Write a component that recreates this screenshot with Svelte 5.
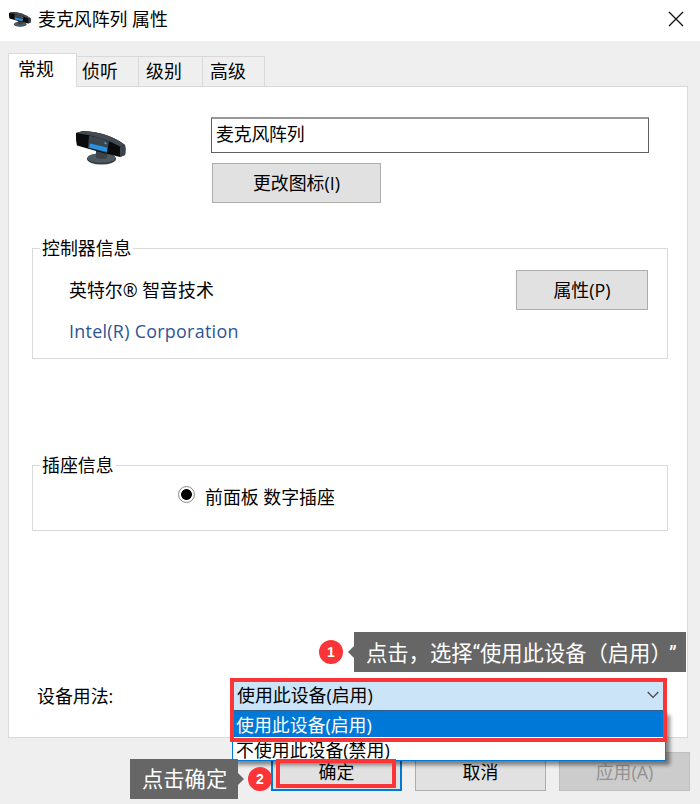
<script lang="ts">
	const tabs = ['常规', '侦听', '级别', '高级'];
	const options = ['使用此设备(启用)', '不使用此设备(禁用)'];

	let activeTab = $state('常规');
	let selected = $state(options[0]);
</script>

{#snippet deviceIcon()}
	<svg class="device" viewBox="0 0 50 34" aria-hidden="true">
		<ellipse cx="25.500" cy="28" rx="14.500" ry="5.500" fill="#343a40" />
		<ellipse cx="25.500" cy="27" rx="14" ry="4.800" fill="#505960" />
		<path d="M20 18h11v9q-5 2-11 0z" fill="#3b4248" />
		<path d="M0 2L7 0Q32 1 49 14q1 5 0 10l-5 2Q22 21 1 14.500Q-.5 8 0 2z" fill="#090b0d" />
		<path d="M0 2L7 0Q32 1 49 14l-5 1.500Q25 5 0 2z" fill="#434a51" />
		<path d="M13 4.500Q23 6 33 10.500l-2 11.500-19-5z" fill="#3b434b" />
		<path d="M14 12.500l17 4v4.500l-18-4.500z" fill="#2793e6" />
		<path d="M28.500 11l2 .5v2l-2-.5z" fill="#3aa5ef" />
		<path d="M44 15.500l5-1.500q1 5 0 10l-5 2z" fill="#3c434a" />
	</svg>
{/snippet}

<div class="window">
	<header class="titlebar">
		{@render deviceIcon()}
		<h1>麦克风阵列 属性</h1>
		<button class="close" type="button" aria-label="关闭">
			<svg viewBox="0 0 16 16" width="16" height="16">
				<path d="M1 1l14 14M15 1L1 15" fill="none" stroke="#111" stroke-width="1.300" />
			</svg>
		</button>
	</header>

	<nav class="tabs">
		{#each tabs as tab (tab)}
			<button type="button" class:active={tab === activeTab} onclick={() => (activeTab = tab)}>{tab}</button>
		{/each}
	</nav>

	<main class="panel">
		<section class="identity">
			{@render deviceIcon()}
			<div>
				<input type="text" value="麦克风阵列" aria-label="名称" />
				<button class="btn" type="button">更改图标(I)</button>
			</div>
		</section>

		<section class="group controller">
			<h2>控制器信息</h2>
			<div>
				<p>英特尔® 智音技术</p>
				<p class="vendor">Intel(R) Corporation</p>
			</div>
			<button class="btn" type="button">属性(P)</button>
		</section>

		<section class="group jack">
			<h2>插座信息</h2>
			<span class="radio"></span>
			<span>前面板 数字插座</span>
		</section>

		<section class="usage">
			<span>设备用法:</span>
			<div class="combo">
				<div class="current">
					<span>{selected}</span>
					<svg viewBox="0 0 12 8" width="12" height="8">
						<path d="M.7 1L6 6.500 11.300 1" fill="none" stroke="#444" stroke-width="1.200" />
					</svg>
				</div>
				<ul class="menu">
					{#each options as option (option)}
						<li class:selected={option === selected}>
							<button type="button" onclick={() => (selected = option)}>{option}</button>
						</li>
					{/each}
				</ul>
				<div class="mark"></div>
				<div class="tip choose">
					<b>1</b>
					<span>点击，选择“使用此设备（启用）<i>”</i></span>
				</div>
			</div>
		</section>
	</main>

	<footer>
		<div class="confirm">
			<button class="btn default" type="button">确定</button>
			<div class="mark"></div>
			<div class="tip ok">
				<span>点击确定</span>
				<b>2</b>
			</div>
		</div>
		<button class="btn" type="button">取消</button>
		<button class="btn" type="button" disabled>应用(A)</button>
	</footer>
</div>

<style>
	:global(body) {
		margin: 0;
	}

	.window,
	.window * {
		box-sizing: border-box;
	}

	.window {
		width: 700px;
		height: 804px;
		overflow: hidden;
		color: #000;
		background: #efefef;
		font: 17.900px/24px 'Open Sans', 'Noto Sans CJK SC', sans-serif;
	}

	h1,
	h2,
	p,
	ul {
		margin: 0;
		padding: 0;
		font-size: inherit;
		font-weight: 400;
	}

	button,
	input {
		margin: 0;
		padding: 0;
		border: 0;
		border-radius: 0;
		color: inherit;
		background: none;
		font: inherit;
	}

	.titlebar {
		display: flex;
		align-items: center;
		height: 41px;
		padding: 0 16px 3px 9px;
		background: #fff;
	}

	.titlebar .device {
		width: 22px;
		height: 15px;
		margin-right: 7px;
	}

	.titlebar h1 {
		flex: 1;
	}

	.close {
		display: flex;
	}

	.tabs {
		position: relative;
		z-index: 1;
		display: flex;
		align-items: flex-end;
		height: 46px;
		padding-left: 8px;
	}

	.tabs button {
		width: 64px;
		height: 31px;
		padding: 0 0 1px 7px;
		border: 1px solid #d9d9d9;
		border-left: 0;
		text-align: left;
	}

	.tabs button:nth-child(2) {
		width: 62px;
		padding-left: 5px;
	}

	.tabs button:last-child {
		width: 62px;
	}

	.tabs .active {
		width: 69px;
		height: 34px;
		padding: 0 0 4px 9px;
		border: 1px solid #d9d9d9;
		border-bottom: 0;
		background: #fff;
	}

	.panel {
		width: 680px;
		height: 652px;
		margin: -1px 0 0 8px;
		padding: 30px 19px 0 23px;
		border: 1px solid #d9d9d9;
		background: #fff;
	}

	.identity {
		display: flex;
		height: 131px;
		padding-left: 44px;
	}

	.identity .device {
		width: 50px;
		height: 34px;
		margin: 14px 85px 0 0;
	}

	.identity input {
		display: block;
		width: 438px;
		height: 36px;
		margin-bottom: 10px;
		padding: 0 0 5px 4px;
		border: 1px solid #606060;
		border-top: 2px solid #999;
		letter-spacing: -0.2px;
	}

	.btn {
		width: 132px;
		height: 40px;
		border: 1px solid #adadad;
		background: #e1e1e1;
	}

	.identity .btn {
		width: 169px;
		margin-left: 1px;
	}

	.group {
		position: relative;
		display: flex;
		width: 636px;
		border: 1px solid #d9d9d9;
	}

	.group h2 {
		position: absolute;
		top: -13px;
		left: 7px;
		padding: 0 2px;
		background: #fff;
	}

	.controller {
		justify-content: space-between;
		height: 111px;
		padding: 21px 19px 0 36px;
	}

	.controller p {
		margin: 8px 0 17px;
	}

	.controller .vendor {
		margin: 0;
		color: #2c5594;
		letter-spacing: 0.28px;
	}

	.jack {
		height: 66px;
		margin-top: 106px;
		padding: 20px 0 0 145px;
	}

	.jack > span:last-child {
		margin-top: -1px;
	}

	.radio {
		width: 17px;
		height: 17px;
		margin: 0 10px 0 0;
		border: 1px solid #888;
		border-radius: 50%;
		background: radial-gradient(circle, #000 5px, #fff 5.800px);
	}

	/* keeps the footer behind the open menu */
	.usage {
		position: relative;
		z-index: 1;
		display: flex;
		align-items: flex-start;
		margin-top: 147px;
		padding-left: 5px;
	}

	.usage > span {
		width: 193px;
		padding-top: 6px;
	}

	.combo {
		position: relative;
		width: 437px;
	}

	.current {
		display: flex;
		align-items: center;
		justify-content: space-between;
		height: 33px;
		padding: 2px 8px 0 7px;
		border-bottom: 1px solid #2d5f8f;
		background: #cce4f7;
	}

	.menu {
		position: absolute;
		top: 33px;
		left: 2px;
		width: 434px;
		height: 50px;
		border: 1px solid #0078d7;
		background: #fff;
		box-shadow: 4px 4px 4px rgb(0 0 0 / 0.45);
		list-style: none;
	}

	.menu li {
		height: 23px;
	}

	.menu .selected {
		height: 25px;
		color: #fff;
		background: #0078d7;
	}

	.menu button {
		display: block;
		padding-left: 3px;
		line-height: 26px;
	}

	.mark {
		position: absolute;
		border: 4px solid #fb3437;
		pointer-events: none;
	}

	.combo .mark {
		inset: 0 0 auto;
		height: 64px;
	}

	.tip {
		position: absolute;
		display: flex;
		align-items: center;
		color: #fff;
		font-family: Roboto, 'Noto Sans CJK SC', sans-serif;
		font-size: 21.300px;
		white-space: nowrap;
	}

	.tip b {
		width: 24px;
		height: 24px;
		border-radius: 50%;
		background: #fb3437;
		font: 700 14px/24px 'Liberation Sans', sans-serif;
		text-align: center;
	}

	.tip span {
		position: relative;
		height: 40px;
		padding: 0 12px;
		background: #666;
		line-height: 41px;
	}

	.tip span::before {
		position: absolute;
		top: 14px;
		border: 6px solid transparent;
		content: '';
	}

	.tip i {
		margin-left: 8px;
		font-style: normal;
	}

	.choose {
		top: -46px;
		right: -19px;
		gap: 11px;
	}

	.choose span {
		width: 332px;
		line-height: 43px;
	}

	.choose span::before {
		right: 100%;
		border-left: 0;
		border-right-color: #666;
	}

	.ok {
		top: 7px;
		right: 130px;
		gap: 10px;
	}

	.ok span {
		width: 108px;
	}

	.ok span::before {
		left: 100%;
		border-right: 0;
		border-left-color: #666;
	}

	footer {
		display: flex;
		gap: 13px;
		justify-content: flex-end;
		padding: 14px 10px 0 0;
	}

	footer .btn {
		width: 131px;
		height: 39px;
	}

	.confirm {
		position: relative;
	}

	.default {
		border: 2px solid #0078d7;
	}

	.confirm .mark {
		z-index: 2;
		top: 7px;
		left: 5px;
		width: 120px;
		height: 29px;
	}

	.confirm .tip {
		z-index: 2;
	}

	.btn:disabled {
		border-color: #bfbfbf;
		color: #929292;
		background: #ccc;
	}
</style>
